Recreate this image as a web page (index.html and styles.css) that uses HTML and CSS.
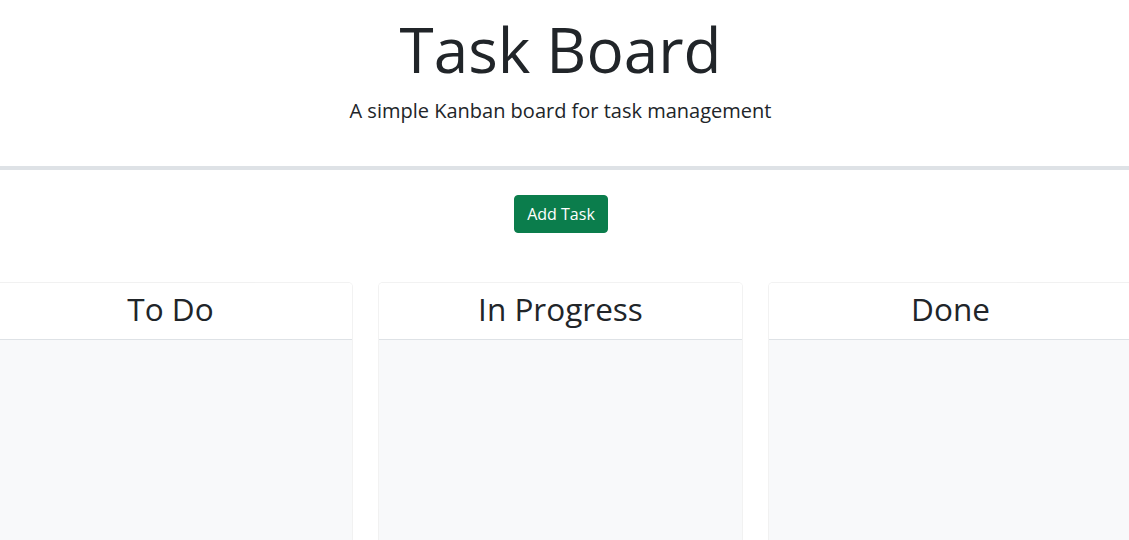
FILE: index.html
```html
<!DOCTYPE html>
<html lang="en">
<head>
<meta charset="utf-8">
<title>Task Board</title>
<link rel="stylesheet" href="styles.css">
</head>
<body>
<header class="page-header">
  <h1 class="title">Task Board</h1>
  <p class="lead">A simple Kanban board for task management</p>
</header>
<hr class="divider">
<div class="actions">
  <button class="btn-add" type="button">Add Task</button>
</div>
<main class="board">
  <section class="lane">
    <h2 class="lane-header">To Do</h2>
    <div class="lane-body"></div>
  </section>
  <section class="lane">
    <h2 class="lane-header">In Progress</h2>
    <div class="lane-body"></div>
  </section>
  <section class="lane">
    <h2 class="lane-header">Done</h2>
    <div class="lane-body"></div>
  </section>
</main>
</body>
</html>
```

FILE: styles.css
```css
* { box-sizing: border-box; }
html, body { margin: 0; padding: 0; }
body {
  font-family: "Open Sans", "Liberation Sans", sans-serif;
  color: #212529;
  background: #fff;
  overflow: hidden;
  width: 1129px;
  height: 540px;
  display: flex;
  flex-direction: column;
}
.page-header {
  text-align: center;
  padding-top: 12px;
  padding-right: 8px;
}
.title {
  margin: 0;
  font-size: 62px;
  font-weight: 400;
  line-height: 1.2;
}
.lead {
  margin: 10px 0 0;
  font-size: 20px;
  font-weight: 400;
  line-height: 1.5;
}
.divider {
  margin: 40px 0 0;
  border: 0;
  height: 4px;
  background: #dee2e6;
  flex: none;
}
.actions {
  display: flex;
  justify-content: center;
  padding-top: 25px;
  padding-right: 7px;
}
.btn-add {
  font-family: inherit;
  font-size: 16px;
  line-height: 24px;
  padding: 6px 12px;
  color: #fff;
  background: #0b7d4c;
  border: 1px solid #0b7d4c;
  border-radius: 4px;
}
.board {
  flex: 1;
  min-height: 0;
  display: grid;
  grid-template-columns: repeat(3, 365px);
  column-gap: 25px;
  margin-top: 49px;
  margin-left: -12px;
}
.lane {
  display: flex;
  flex-direction: column;
  border: 1px solid rgba(0, 0, 0, 0.05);
  border-bottom: 0;
  border-radius: 5px 5px 0 0;
  overflow: hidden;
  background: #fff;
}
.lane-header {
  margin: 0;
  padding: 7px 8px 11px;
  font-size: 31.5px;
  font-weight: 400;
  line-height: 38px;
  text-align: center;
  border-bottom: 1px solid #dee2e6;
  background: #fff;
}
.lane-body {
  flex: 1;
  background: #f8f9fa;
}
```
